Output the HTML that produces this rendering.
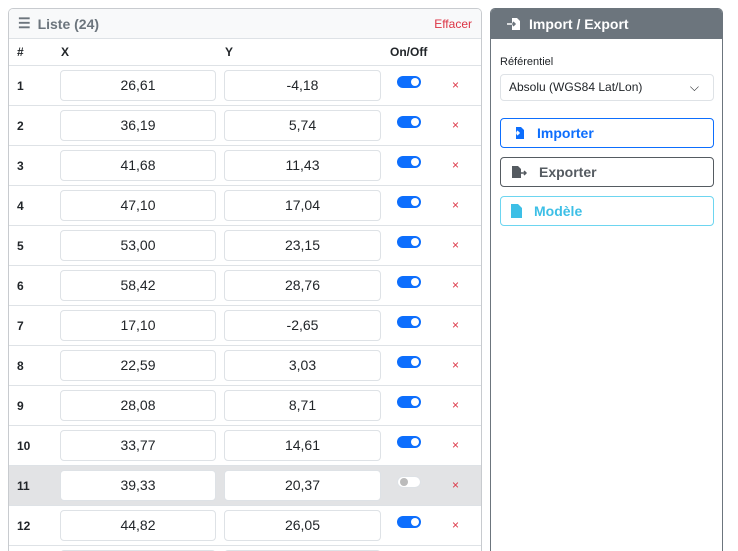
<!DOCTYPE html>
<html style="height:551px;overflow:hidden"><head><meta charset="utf-8"><style>
*{box-sizing:border-box;margin:0;padding:0}
body{width:738px;height:551px;overflow:hidden;background:#fff;font-family:"Liberation Sans",sans-serif;color:#212529;position:relative}
.card{position:absolute;left:8px;top:8px;width:474px;height:543px;border:1px solid #c8cbcf;border-bottom:none;border-radius:5px 5px 0 0;overflow:hidden}
.ch{height:30px;background:#f8f9fa;border-bottom:1px solid #dee2e6;display:flex;align-items:center;padding:0 9px;font-size:14px;font-weight:bold;color:#6c757d}
.ch .ef{margin-left:auto;font-weight:normal;font-size:12px;color:#dc3545}
.th{height:27px;border-bottom:1px solid #dee2e6;position:relative;font-size:12px;font-weight:bold}
.th span,.row span{position:absolute}
.row{height:40px;border-bottom:1px solid #dee2e6;position:relative}
.row.g{background:#e2e3e5}
.num{left:8px;top:13px;font-size:12px;font-weight:bold}
.in{position:absolute;top:4px;height:31px;border:1px solid #dee2e6;border-radius:4px;background:#fff;font-size:14px;text-align:center;line-height:29px}
.tg{position:absolute;left:388px;top:10px;width:24px;height:12px;border-radius:6px;background:#0d6efd}
.tg:after{content:"";position:absolute;right:2px;top:2px;width:8px;height:8px;border-radius:50%;background:#fff}
.tg.off{background:#fff;border:1px solid #dee2e6}
.tg.off:after{left:2px;right:auto;top:1px;background:#bbb}
.x{left:443px;top:12px;color:#dc3545;font-size:12px}
.rc{position:absolute;left:490px;top:8px;width:233px;height:543px;border:1px solid #6c757d;border-bottom:none;border-radius:5px 5px 0 0;overflow:hidden}
.rh{height:30px;background:#6c757d;color:#fff;font-weight:bold;font-size:14px;display:flex;align-items:center;padding-left:16px;gap:8px}
.lbl{position:absolute;left:9px;top:47px;font-size:11px}
.sel{position:absolute;left:9px;top:65px;width:214px;height:27px;border:1px solid #dee2e6;border-radius:4px;font-size:12px;padding-left:8px;line-height:25px}
.btn{position:absolute;left:9px;width:214px;height:30px;border:1px solid;border-radius:4px;font-size:14px;font-weight:bold;display:flex;align-items:center;padding-left:10px;gap:12px}
</style></head><body>
<div class="card">
<div class="ch"><span style="font-size:14px;margin-right:7px">☰</span>Liste (24)<span class="ef">Effacer</span></div>
<div class="th"><span style="left:8px;top:6px">#</span><span style="left:52px;top:6px">X</span><span style="left:216px;top:6px">Y</span><span style="left:381px;top:6px">On/Off</span></div>
<div id="rows"></div>
</div>
<div class="rc">
<div class="rh"><svg width="14" height="14" viewBox="0 0 14 14"><path d="M5 1h5l3 3v9H5v-3" fill="#fff"/><path d="M0 7h8M6 5l2 2-2 2" stroke="#6c757d" stroke-width="1.5" fill="none"/><path d="M0 7h5" stroke="#fff" stroke-width="1.5"/></svg>Import / Export</div>
<div class="lbl">Référentiel</div>
<div class="sel">Absolu (WGS84 Lat/Lon)<span style="position:absolute;right:14px;top:0;font-size:12px">⌵</span></div>
<div class="btn" style="top:109px;color:#0d6efd;border-color:#0d6efd"><svg width="14" height="14" viewBox="0 0 14 14"><path d="M5 1h5l3 3v9H5z" fill="#0d6efd"/><path d="M0 7h8M6 5l2 2-2 2" stroke="#fff" stroke-width="1.5" fill="none"/></svg>Importer</div>
<div class="btn" style="top:148px;color:#555b61;border-color:#555b61"><svg width="16" height="14" viewBox="0 0 16 14"><path d="M1 1h6l3 3v9H1z" fill="#555b61"/><path d="M8 8h7M13 6l2 2-2 2" stroke="#555b61" stroke-width="1.5" fill="none"/></svg>Exporter</div>
<div class="btn" style="top:187px;color:#3dbfe6;border-color:#6dd5f0"><svg width="11" height="14" viewBox="0 0 11 14"><path d="M0 0h7l4 4v10H0z" fill="#3dbfe6"/></svg>Modèle</div>
</div>
<script>
var d=[["26,61","-4,18"],["36,19","5,74"],["41,68","11,43"],["47,10","17,04"],["53,00","23,15"],["58,42","28,76"],["17,10","-2,65"],["22,59","3,03"],["28,08","8,71"],["33,77","14,61"],["39,33","20,37"],["44,82","26,05"],["50,31","31,70"]];
var h="";d.forEach(function(r,i){var g=i==10;h+='<div class="row'+(g?' g':'')+'"><span class="num">'+(i+1)+'</span><div class="in" style="left:51px;width:156px">'+r[0]+'</div><div class="in" style="left:215px;width:157px">'+r[1]+'</div><div class="tg'+(g?' off':'')+'"></div><span class="x">×</span></div>';});
document.getElementById("rows").innerHTML=h;
</script>
</body></html>
